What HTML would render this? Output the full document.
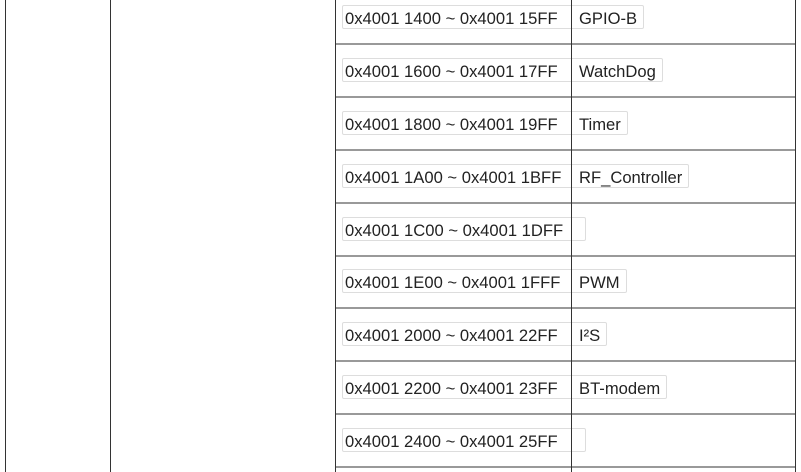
<!DOCTYPE html>
<html><head><style>
html,body{margin:0;padding:0;background:#fff;width:801px;height:472px;overflow:hidden;position:relative;font-family:"Liberation Sans","DejaVu Sans",sans-serif;}
.v{position:absolute;top:0;height:472px;width:1px;background:#333;z-index:2;}
.h{position:absolute;left:335px;width:461px;height:2px;background:#999;}
.box{position:absolute;left:342px;height:22px;border:1px solid #ddd;border-radius:2px;font-size:16.6px;color:#222;line-height:26px;white-space:nowrap;padding-right:6px;overflow:hidden;}
.a{display:inline-block;width:236px;padding-left:2px;box-sizing:border-box;}
</style></head><body>
<div class="v" style="left:5px"></div>
<div class="v" style="left:110px"></div>
<div class="v" style="left:335px"></div>
<div class="v" style="left:571px"></div>
<div class="v" style="left:795px"></div>
<div class="h" style="top:43px"></div>
<div class="h" style="top:96px"></div>
<div class="h" style="top:149px"></div>
<div class="h" style="top:202px"></div>
<div class="h" style="top:255px"></div>
<div class="h" style="top:307px"></div>
<div class="h" style="top:360px"></div>
<div class="h" style="top:413px"></div>
<div class="h" style="top:466px"></div>
<div class="box" style="top:5px"><span class="a">0x4001 1400 ~ 0x4001 15FF</span>GPIO-B</div>
<div class="box" style="top:58px"><span class="a">0x4001 1600 ~ 0x4001 17FF</span>WatchDog</div>
<div class="box" style="top:111px"><span class="a">0x4001 1800 ~ 0x4001 19FF</span>Timer</div>
<div class="box" style="top:164px"><span class="a">0x4001 1A00 ~ 0x4001 1BFF</span>RF_Controller</div>
<div class="box" style="top:217px"><span class="a">0x4001 1C00 ~ 0x4001 1DFF</span></div>
<div class="box" style="top:269px"><span class="a">0x4001 1E00 ~ 0x4001 1FFF</span>PWM</div>
<div class="box" style="top:322px"><span class="a">0x4001 2000 ~ 0x4001 22FF</span>I²S</div>
<div class="box" style="top:375px"><span class="a">0x4001 2200 ~ 0x4001 23FF</span>BT-modem</div>
<div class="box" style="top:428px"><span class="a">0x4001 2400 ~ 0x4001 25FF</span></div>
</body></html>
